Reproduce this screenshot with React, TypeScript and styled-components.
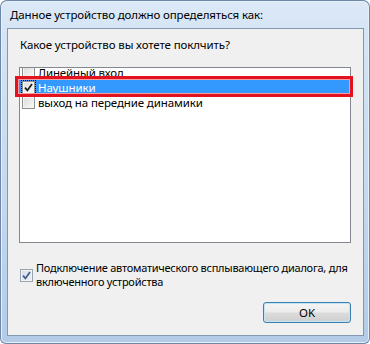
import React from "react";
import styled, { createGlobalStyle } from "styled-components";

const Global = createGlobalStyle`
  html, body { margin: 0; padding: 0; background: #ffffff; }
  body { font-family: "Noto Sans", "Open Sans", sans-serif; }
  * { box-sizing: border-box; }
`;

const FONT_SIZE = "11.5px";

const Window = styled.div`
  width: 370px;
  height: 344px;
  display: flex;
  flex-direction: column;
  padding: 0 6px 8px 7px;
  border-radius: 7px 7px 6px 6px;
  background: linear-gradient(180deg, #dce9f7 0px, #d6e5f5 28px, #c3d7ee 60%, #b3cbe7 100%);
  box-shadow: inset 0 0 0 1px #6f87a8, inset 0 0 0 2px #e6eff9;
`;

const TitleBar = styled.div`
  height: 28px;
  display: flex;
  align-items: center;
  padding-left: 3px;
  padding-top: 1px;
  font-size: ${FONT_SIZE};
  letter-spacing: -0.12px;
  color: #000;
  white-space: nowrap;
`;

const Client = styled.div`
  flex: 1;
  display: flex;
  flex-direction: column;
  background: #f0f0f0;
  border: 1px solid #8497b0;
  padding: 8px 12px 12px 11px;
`;

const Heading = styled.div`
  height: 16px;
  line-height: 16px;
  font-size: ${FONT_SIZE};
  letter-spacing: -0.12px;
  color: #000;
  padding-left: 1px;
  white-space: nowrap;
`;

const ListWrap = styled.div`
  position: relative;
  margin-top: 14px;
  height: 176px;
`;

const ListBox = styled.div`
  height: 100%;
  background: #fff;
  border: 1px solid #828790;
  overflow: hidden;
`;

const Rows = styled.div`
  margin-top: -3px;
  display: flex;
  flex-direction: column;
`;

const Row = styled.div<{ $selected?: boolean }>`
  height: 15px;
  line-height: 15px;
  display: flex;
  align-items: center;
  gap: 3px;
  padding-left: 2px;
  font-size: ${FONT_SIZE};
  letter-spacing: -0.12px;
  white-space: nowrap;
  color: ${(p) => (p.$selected ? "#fff" : "#000")};
  background: ${(p) => (p.$selected ? "#3399ff" : "transparent")};
`;

const Annotation = styled.div`
  position: absolute;
  left: -4px;
  top: 9px;
  width: 338px;
  height: 21px;
  border: 3px solid #e2131e;
  box-shadow: inset 0 0 0 1px #f2a0a4;
  pointer-events: none;
`;

const Box = styled.span<{ $focus?: boolean; $soft?: boolean }>`
  flex: none;
  width: 13px;
  height: 13px;
  display: inline-flex;
  align-items: center;
  justify-content: center;
  border: 1px solid ${(p) => (p.$soft ? "#9aa3b0" : "#8e8f8f")};
  background: ${(p) =>
    p.$soft
      ? "linear-gradient(135deg, #d8dde6 0%, #eef1f6 100%)"
      : "linear-gradient(135deg, #dcdcdc 0%, #f8f8f8 100%)"};
  box-shadow: inset 0 0 0 1px #f4f4f4;
  outline: ${(p) => (p.$focus ? "1px dotted #000" : "none")};
  outline-offset: 0px;
`;

const Check = ({ color }: { color: string }) => (
  <svg width="9" height="9" viewBox="0 0 9 9">
    <path d="M1 4.6 L3.4 7.4 L8 1" fill="none" stroke={color} strokeWidth="1.7" />
  </svg>
);

const Checkbox = ({
  checked,
  focus,
  soft,
  color = "#1c1c1c",
}: {
  checked?: boolean;
  focus?: boolean;
  soft?: boolean;
  color?: string;
}) => (
  <Box $focus={focus} $soft={soft}>
    {checked && <Check color={color} />}
  </Box>
);

const OptionRow = styled.div`
  margin-top: 18px;
  display: flex;
  align-items: center;
  gap: 3px;
  padding-left: 1px;
`;

const OptionText = styled.div`
  font-size: 11px;
  line-height: 14px;
  letter-spacing: -0.25px;
  color: #000;
  white-space: nowrap;
`;

const Footer = styled.div`
  margin-top: 13px;
  display: flex;
  justify-content: flex-end;
`;

const Button = styled.button`
  width: 88px;
  height: 21px;
  border: 1px solid #3c7fb1;
  border-radius: 3px;
  font-family: "Noto Sans", "Open Sans", sans-serif;
  font-size: ${FONT_SIZE};
  color: #000;
  padding: 0;
  background: linear-gradient(180deg, #f4f4f4 0%, #ececec 48%, #dcdcdc 52%, #cfcfcf 100%);
  box-shadow: inset 0 0 0 1px #c4e4f6;
`;

export default function App() {
  return (
    <>
      <Global />
      <Window>
        <TitleBar>Данное устройство должно определяться как:</TitleBar>
        <Client>
          <Heading>Какое устройство вы хотете поклчить?</Heading>
          <ListWrap>
            <ListBox>
              <Rows>
                <Row>
                  <Checkbox />
                  <span>Линейный вход</span>
                </Row>
                <Row $selected>
                  <Checkbox checked focus />
                  <span>Наушники</span>
                </Row>
                <Row>
                  <Checkbox />
                  <span>выход на передние динамики</span>
                </Row>
              </Rows>
            </ListBox>
            <Annotation />
          </ListWrap>
          <OptionRow>
            <Checkbox checked soft color="#3f5a8f" />
            <OptionText>
              Подключение автоматического всплывающего диалога, для
              <br />
              включенного устройства
            </OptionText>
          </OptionRow>
          <Footer>
            <Button>OK</Button>
          </Footer>
        </Client>
      </Window>
    </>
  );
}
